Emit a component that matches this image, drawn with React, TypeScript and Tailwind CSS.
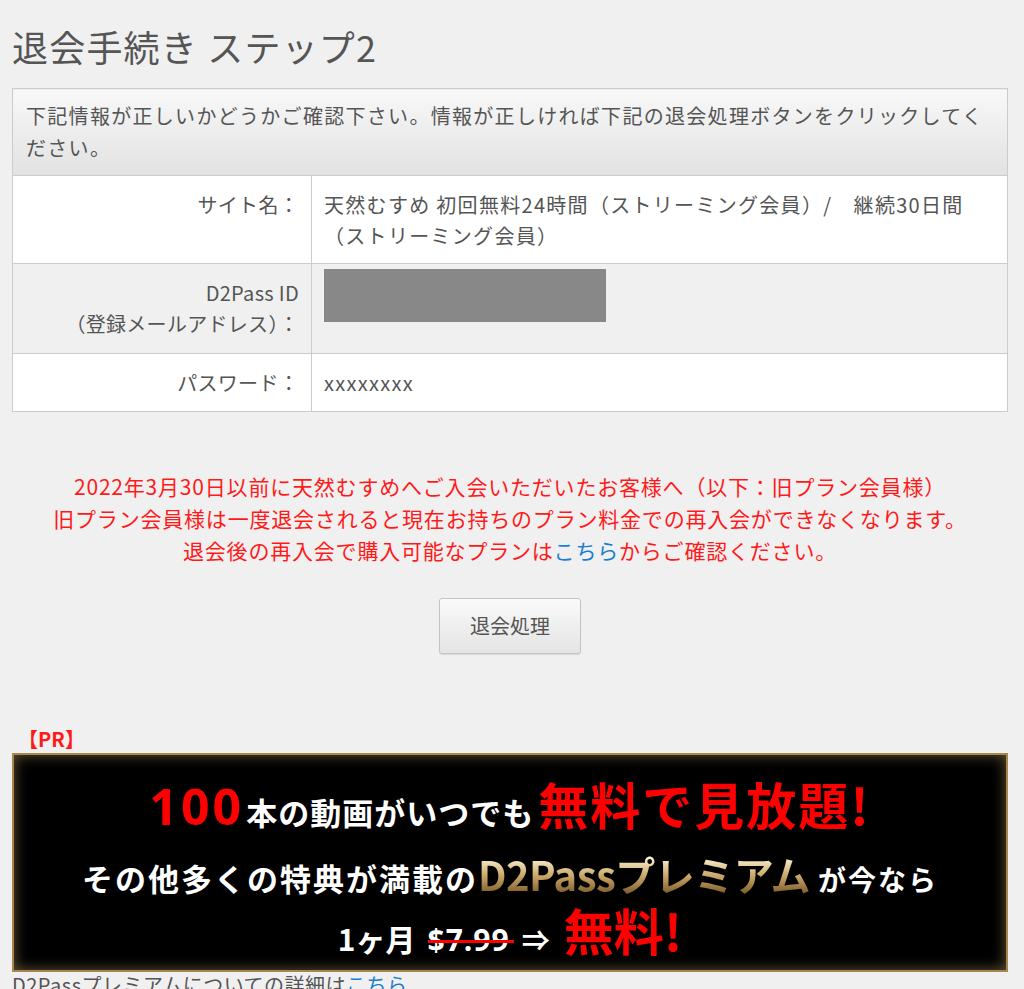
import React from 'react';

const rows = [
  {
    label: ['サイト名：'],
    value: '天然むすめ 初回無料24時間（ストリーミング会員）/　継続30日間（ストリーミング会員）',
    cls: 'bg-white h-[88px]',
  },
  { label: ['D2Pass ID', '（登録メールアドレス）：'], value: null, cls: 'bg-[#f0f0f0] h-[90px]' },
  { label: ['パスワード：'], value: 'xxxxxxxx', cls: 'bg-white h-[58px]' },
];

export default function App() {
  return (
    <div className="min-h-screen bg-[#f0f0f0] pl-3 pr-4 font-['Noto_Sans_CJK_JP','Noto_Sans',sans-serif] text-[#555]">
      <h1 className="pt-[23px] pb-[19px] text-[36px] leading-[46px] font-normal tracking-[1.2px]">
        退会手続き ステップ2
      </h1>

      <table className="w-full border-collapse text-[20px] leading-[31px] tracking-[1.3px]">
        <thead>
          <tr>
            <th
              colSpan={2}
              className="border border-[#ccc] bg-[linear-gradient(#f8f8f8,#e2e2e2)] pl-[13px] pr-4 pt-[11px] pb-[11px] text-left font-normal leading-[32px]"
            >
              下記情報が正しいかどうかご確認下さい。情報が正しければ下記の退会処理ボタンをクリックしてください。
            </th>
          </tr>
        </thead>
        <tbody>
          {rows.map((row, i) => (
            <tr key={i} className={row.cls}>
              <td className="w-[299px] border border-[#ccc] pt-[13px] pb-[12px] pr-[12px] text-right align-top tracking-[0.3px]">
                {row.label.map((l) => (
                  <div key={l}>{l}</div>
                ))}
              </td>
              <td className="border border-[#ccc] pl-[12px] pr-4 pt-[13px] pb-[12px] align-top">
                {row.value ?? <div className="-mt-[8px] h-[53px] w-[282px] bg-[#888]" />}
              </td>
            </tr>
          ))}
        </tbody>
      </table>

      <div className="mt-[58px] text-center text-[21px] leading-[32px] tracking-[0.8px] text-[#ff1a1a]">
        <p>2022年3月30日以前に天然むすめへご入会いただいたお客様へ（以下：旧プラン会員様）</p>
        <p>旧プラン会員様は一度退会されると現在お持ちのプラン料金での再入会ができなくなります。</p>
        <p>
          退会後の再入会で購入可能なプランは<a className="text-[#1a7fd0]">こちら</a>からご確認ください。
        </p>
      </div>

      <div className="mt-[32px] flex justify-center">
        <button className="h-[56px] w-[142px] rounded-[3px] border border-[#c4c4c4] bg-[linear-gradient(#fafafa,#e4e4e4)] text-[20px] text-[#555] shadow-[0_1px_1px_rgba(0,0,0,0.1)]">
          退会処理
        </button>
      </div>

      <div className="mt-[71px] ml-[6px] text-[20px] font-bold leading-[28px] text-[#ff1a1a]">【PR】</div>

      <div className="h-[219px] border-2 border-[#a8874f] bg-black shadow-[inset_0_0_14px_rgba(190,160,100,0.55)]">
        <div className="flex h-full flex-col items-center pt-[23px] font-bold leading-none">
          <div className="flex items-baseline">
            <span className="mr-[2px] text-[50px] tracking-[3px] text-[#ff0000] font-['Open_Sans',sans-serif]">100</span>
            <span className="text-[31px] tracking-[1px] text-white">本の動画がいつでも</span>
            <span className="ml-[4px] text-[50px] tracking-[2px] text-[#ff0000]">無料で見放題!</span>
          </div>
          <div className="mt-[23px] flex items-baseline">
            <span className="text-[31px] tracking-[2px] text-white">その他多くの特典が満載の</span>
            <span className="bg-[linear-gradient(#fbf0cf_10%,#c9a667_55%,#7d5b2b)] bg-clip-text text-[40px] tracking-[-0.5px] text-transparent">
              D2Passプレミアム
            </span>
            <span className="ml-[8px] text-[28px] tracking-[2px] text-white">が今なら</span>
          </div>
          <div className="mt-[10px] flex items-baseline text-white">
            <span className="text-[30px]">1ヶ月</span>
            <span className="relative ml-[12px] text-[30px] tracking-[1px] font-['Open_Sans',sans-serif]">
              $7.99
              <span className="absolute left-0 right-[-4px] top-[50%] h-[3px] bg-[#ff0000]" />
            </span>
            <span className="ml-[12px] text-[28px]">⇒</span>
            <span className="ml-[14px] text-[50px] text-[#ff0000]">無料!</span>
          </div>
        </div>
      </div>

      <p className="text-[20px] leading-[26px] tracking-[0.5px] text-[#555]">
        D2Passプレミアムについての詳細は<a className="text-[#1a7fd0]">こちら</a>
      </p>
    </div>
  );
}
